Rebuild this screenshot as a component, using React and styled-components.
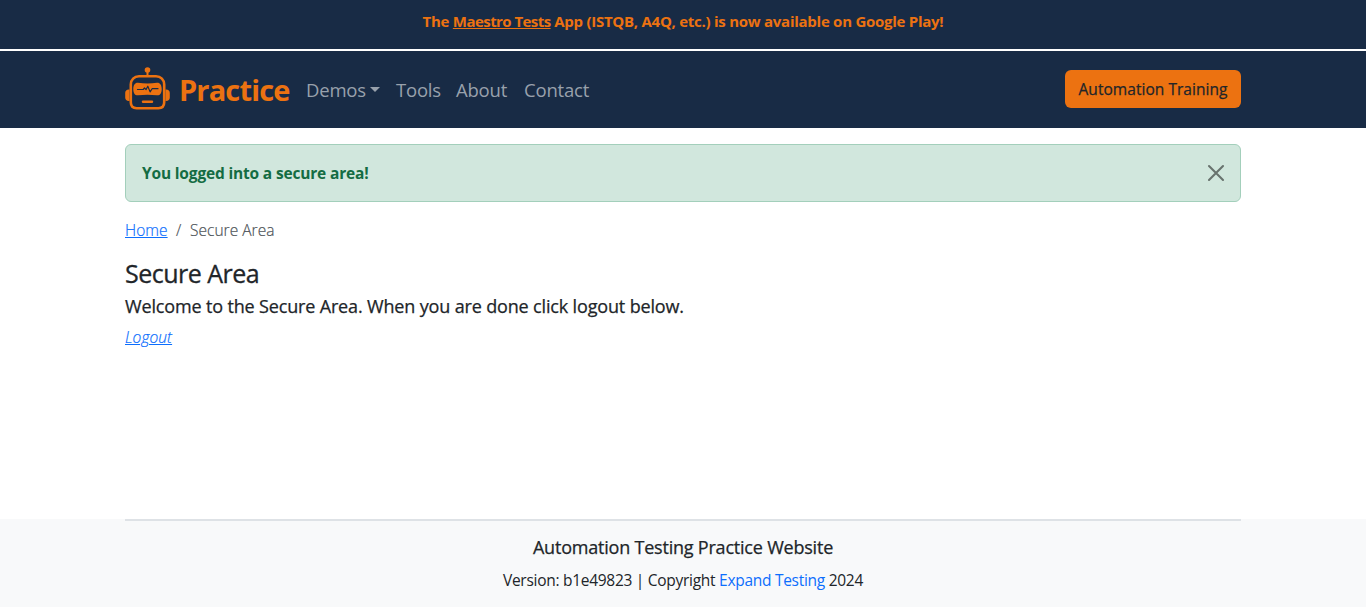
import React from "react";
import styled, { createGlobalStyle } from "styled-components";

const GlobalStyle = createGlobalStyle`
  *, *::before, *::after { box-sizing: border-box; }
  body {
    margin: 0;
    background: #fff;
    color: #212529;
    font-family: "Open Sans", "Noto Sans", sans-serif;
    font-size: 16px;
    line-height: 24px;
    font-weight: 400;
  }
  h3, h5, p { margin: 0; }
  a { color: #0d6efd; text-underline-offset: 1px; text-decoration-thickness: 1px; }
`;

const Page = styled.div`
  height: 607px;
  display: flex;
  flex-direction: column;
  overflow: hidden;
`;

const Container = styled.div`
  width: 1116px;
  margin: 0 auto;
`;

const Banner = styled.div`
  height: 51px;
  padding-top: 9px;
  background: #182b45;
  border-bottom: 2px solid #fff;
  color: #ec7211;
  text-align: center;
  font-size: 15px;
  font-weight: 700;
  letter-spacing: -0.26px;
  white-space: nowrap;
  a { color: inherit; letter-spacing: -0.56px; }
`;

const Navbar = styled.header`
  height: 77px;
  background: #182b45;
`;

const NavInner = styled(Container)`
  height: 76px;
  display: flex;
  align-items: center;
`;

const Brand = styled.a`
  display: flex;
  align-items: center;
  width: 181px;
  gap: 8px;
  color: #ec7211;
  font-size: 29px;
  line-height: 44px;
  font-weight: 700;
  letter-spacing: -0.85px;
  text-decoration: none;
  svg { flex: none; }
`;

const BrandName = styled.span`
  padding-top: 1px;
`;

const NavLinks = styled.nav`
  display: flex;
  gap: 16px;
  padding-top: 1px;
`;

const NavLink = styled.a`
  display: flex;
  align-items: center;
  width: ${(p) => p.$width}px;
  color: #98a1ac;
  font-size: 18.5px;
  letter-spacing: -0.2px;
  white-space: nowrap;
  text-decoration: none;
`;

const Caret = styled.span`
  margin-left: auto;
  border-top: 5px solid currentColor;
  border-left: 5px solid transparent;
  border-right: 5px solid transparent;
`;

const TrainingButton = styled.button`
  width: 176px;
  height: 38px;
  margin-left: auto;
  padding: 0;
  border: 0;
  border-radius: 6px;
  background: #ec7211;
  color: #212529;
  font: 400 15.5px/24px "Open Sans", "Noto Sans", sans-serif;
  letter-spacing: 0.04px;
  -webkit-text-stroke: 0.25px currentColor;
`;

const Main = styled.main`
  flex: 1;
  padding-top: 16px;
`;

const Alert = styled.div`
  height: 58px;
  display: flex;
  align-items: center;
  justify-content: space-between;
  padding: 0 15px 0 16px;
  border: 1px solid #a3cfbb;
  border-radius: 6px;
  background: #d1e7dd;
  color: #146c43;
  font-size: 15.5px;
  font-weight: 700;
  letter-spacing: -0.17px;
`;

const Breadcrumb = styled.nav`
  display: flex;
  gap: 8.5px;
  margin-top: 16px;
  font-size: 15.5px;
  font-weight: 300;
  letter-spacing: 0.04px;
  color: #4d5358;
  -webkit-text-stroke: 0.2px currentColor;
`;

const Title = styled.h3`
  margin-top: 15px;
  font-size: 25px;
  line-height: 32px;
  font-weight: 400;
  letter-spacing: -0.5px;
  -webkit-text-stroke: 0.3px currentColor;
`;

const Subtitle = styled.h5`
  margin-top: 5px;
  font-size: 18px;
  line-height: 24px;
  font-weight: 400;
  letter-spacing: -0.155px;
  -webkit-text-stroke: 0.25px currentColor;
`;

const Logout = styled.a`
  display: inline-block;
  margin-top: 7px;
  font-size: 15.5px;
  font-style: italic;
  font-weight: 300;
  letter-spacing: 0.08px;
  -webkit-text-stroke: 0.2px currentColor;
`;

const Footer = styled.footer`
  height: 88px;
  background: #f8f9fa;
  text-align: center;
`;

const FooterInner = styled(Container)`
  border-top: 2px solid #dee2e6;
  padding-top: 14px;
`;

const FooterTitle = styled.h5`
  font-size: 18px;
  line-height: 24px;
  font-weight: 400;
  letter-spacing: -0.21px;
  -webkit-text-stroke: 0.25px currentColor;
`;

const FooterText = styled.p`
  margin-top: 9px;
  font-size: 15.5px;
  letter-spacing: -0.28px;
  a { text-decoration: none; }
`;

const RobotIcon = () => (
  <svg width="46" height="44" viewBox="0 0 46 44" fill="none" stroke="#ec7211">
    <circle cx="22.5" cy="3" r="2.8" fill="#ec7211" stroke="none" />
    <path d="M22.5 5v5" strokeWidth="2" />
    <path
      d="M14 9.3h17c4.8 0 8.200 3.400 8.200 8.200v17.800c0 4-2 5.900-5.800 5.900H11.600c-3.800 0-5.800-1.900-5.800-5.900V17.500C5.800 12.700 9.200 9.300 14 9.300z"
      strokeWidth="2.6"
    />
    <path
      d="M4.5 22.5H3.8C1.6 22.500 0.200 23.700 0.200 26v4.500C0.200 32.800 1.600 34 3.800 34h0.700zM40.500 22.500h0.700c2.200 0 3.600 1.200 3.600 3.500v4.500c0 2.300-1.400 3.500-3.600 3.500h-0.700z"
      fill="#ec7211"
      stroke="none"
    />
    <path
      d="M13 15.7Q22.5 17.1 32 15.700C35 15.500 36.700 18 36.700 21.900c0 4.100-1.700 6.700-4.700 6.400Q22.500 27.100 13 28.300C10 28.600 8.300 26 8.300 21.900c0-3.900 1.700-6.400 4.700-6.200z"
      fill="#ec7211"
      stroke="none"
    />
    <path
      d="M12.500 22.500h5.700l1.300-1.500 1.600 1.500 1.700-3.300 2.300 5.700 2-3.200h5.900"
      stroke="#182b45"
      strokeWidth="1.2"
      strokeLinecap="round"
      strokeLinejoin="round"
    />
    <path d="M18 34.800h9" strokeWidth="2.4" strokeLinecap="round" />
  </svg>
);

const CloseIcon = () => (
  <svg width="18" height="18" viewBox="0 0 18 18" fill="none" stroke="#68736e" strokeWidth="2.1" strokeLinecap="round">
    <path d="M2 2l14 14M16 2L2 16" />
  </svg>
);

export default function App() {
  return (
    <Page>
      <GlobalStyle />
      <Banner>
        The <a href="#app">Maestro Tests</a> App (ISTQB, A4Q, etc.) is now available on Google Play!
      </Banner>
      <Navbar>
        <NavInner>
          <Brand href="#home">
            <RobotIcon />
            <BrandName>Practice</BrandName>
          </Brand>
          <NavLinks>
            <NavLink href="#demos" $width={74}>
              Demos
              <Caret />
            </NavLink>
            <NavLink href="#tools" $width={44}>Tools</NavLink>
            <NavLink href="#about" $width={52}>About</NavLink>
            <NavLink href="#contact" $width={66}>Contact</NavLink>
          </NavLinks>
          <TrainingButton>Automation Training</TrainingButton>
        </NavInner>
      </Navbar>
      <Main>
        <Container>
          <Alert>
            <span>You logged into a secure area!</span>
            <CloseIcon />
          </Alert>
          <Breadcrumb>
            <a href="#home">Home</a>
            <span>/</span>
            <span>Secure Area</span>
          </Breadcrumb>
          <Title>Secure Area</Title>
          <Subtitle>Welcome to the Secure Area. When you are done click logout below.</Subtitle>
          <Logout href="#logout">Logout</Logout>
        </Container>
      </Main>
      <Footer>
        <FooterInner>
          <FooterTitle>Automation Testing Practice Website</FooterTitle>
          <FooterText>
            Version: b1e49823 | Copyright <a href="#expand">Expand Testing</a> 2024
          </FooterText>
        </FooterInner>
      </Footer>
    </Page>
  );
}
